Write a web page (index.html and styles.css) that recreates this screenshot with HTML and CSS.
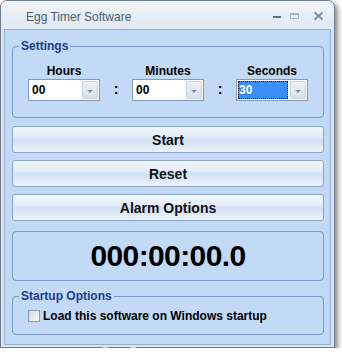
FILE: index.html
```html
<!DOCTYPE html>
<html lang="en">
<head>
  <meta charset="UTF-8">
  <title>Egg Timer Software</title>
  <link rel="stylesheet" href="styles.css">
</head>
<body>

  <div class="window">
    <div class="titlebar">
      <span class="title">Egg Timer Software</span>
      <svg class="controls" width="60" height="14" viewBox="0 0 60 14">
        <rect x="4" y="6" width="8" height="2" fill="#5f6d7e"/>
        <rect x="21.5" y="3.5" width="8" height="5" fill="none" stroke="#aab6c5"/>
        <rect x="21" y="3" width="9" height="2" fill="#aab6c5"/>
        <path d="M45.5 2.5 L53.5 9.5 M53.5 2.5 L45.5 9.5" stroke="#7f8ea2" stroke-width="2"/>
      </svg>
    </div>

    <div class="client">
      <fieldset class="group">
        <legend>Settings</legend>
        <div class="fields">
          <div class="field">
            <label>Hours</label>
            <div class="combo"><span class="value">00</span><span class="drop"></span></div>
          </div>
          <span class="colon">:</span>
          <div class="field">
            <label>Minutes</label>
            <div class="combo"><span class="value">00</span><span class="drop"></span></div>
          </div>
          <span class="colon">:</span>
          <div class="field">
            <label>Seconds</label>
            <div class="combo"><span class="value selected">30</span><span class="drop"></span></div>
          </div>
        </div>
      </fieldset>

      <button class="btn first">Start</button>
      <button class="btn">Reset</button>
      <button class="btn">Alarm Options</button>

      <div class="display">000:00:00.0</div>

      <fieldset class="group startup">
        <legend>Startup Options</legend>
        <label class="check"><span class="box"></span>Load this software on Windows startup</label>
      </fieldset>
    </div>

    <div class="watermark">GearDownload.com</div>
  </div>

</body>
</html>
```

FILE: styles.css
```css
body {
  margin: 0;
  background: #fff;
  font-family: 'Liberation Sans', Arial, sans-serif;
}

.window {
  position: relative;
  width: 333px;
  border: 1px solid #6c7d92;
  border-radius: 7px 7px 0 0;
  background: #dde6f0;
  box-shadow: 3px 3px 5px rgba(0, 0, 0, 0.45);
}

.titlebar {
  height: 19px;
  padding: 9px 0 0 25px;
  display: flex;
  align-items: flex-start;
  background: linear-gradient(#f1f5fa, #e0e8f2);
  border-radius: 6px 6px 0 0;
}

.title {
  flex: 1;
  font-size: 12px;
  color: #4e5b6b;
}

.controls {
  margin-right: 5px;
}

.client {
  margin: 0 3px 2px;
  padding: 0 6px 9px 7px;
  border: 1px solid #98adc8;
  background: #c3daf7;
}

.group {
  margin: 9px 0 0;
  padding: 0;
  min-width: 0;
  border: 1px solid #7b98c2;
  border-radius: 4px;
}

.group legend {
  margin-left: 6px;
  padding: 0 2px;
  font-size: 12px;
  font-weight: bold;
  line-height: 14px;
  color: #1d3f83;
}

.fields {
  display: flex;
  align-items: flex-end;
  padding: 11px 15px 16px;
}

.field {
  width: 72px;
  display: flex;
  flex-direction: column;
  align-items: center;
}

.field label {
  font-size: 12px;
  font-weight: bold;
  line-height: 14px;
  margin-bottom: 1px;
  color: #000;
}

.colon {
  width: 32px;
  height: 22px;
  line-height: 21px;
  text-align: center;
  font-size: 14px;
  font-weight: bold;
}

.combo {
  box-sizing: border-box;
  width: 72px;
  height: 22px;
  display: flex;
  border: 1px solid #7f9db9;
  background: #fff;
}

.value {
  flex: 1;
  padding-left: 3px;
  font-size: 12px;
  font-weight: bold;
  line-height: 20px;
}

.value.selected {
  margin: 1px;
  padding-left: 1px;
  line-height: 18px;
  background: #3a8ef8;
  color: #fff;
  outline: 1px dotted #000;
  outline-offset: -1px;
}

.drop {
  position: relative;
  width: 14px;
  margin: 1px;
  border: 1px solid #c9d4e4;
  border-radius: 2px;
  background: linear-gradient(#f0f3f8, #d6dfeb);
}

.drop::after {
  content: '';
  position: absolute;
  left: 4px;
  top: 8px;
  border-left: 3px solid transparent;
  border-right: 3px solid transparent;
  border-top: 3px solid #8390a3;
}

.btn {
  display: block;
  box-sizing: border-box;
  width: 100%;
  height: 27px;
  margin-top: 7px;
  padding: 0;
  border: 1px solid #8ba6c9;
  border-radius: 3px;
  background: linear-gradient(#f3f7fc 0%, #e2ecf8 40%, #d3e2f5 52%, #dde9f8 75%, #edf3fb 100%);
  font-family: 'Liberation Sans', Arial, sans-serif;
  font-size: 14px;
  font-weight: bold;
  color: #111;
}

.btn.first {
  margin-top: 8px;
}

.display {
  box-sizing: border-box;
  height: 50px;
  margin-top: 10px;
  display: flex;
  align-items: center;
  justify-content: center;
  border: 1px solid #7b98c2;
  border-radius: 4px;
  font-size: 30px;
  font-weight: bold;
  letter-spacing: -0.6px;
  color: #000;
}

.startup {
  margin-top: 8px;
}

.check {
  display: flex;
  align-items: center;
  padding: 6px 0 11px 15px;
  font-size: 12px;
  font-weight: bold;
  line-height: 14px;
}

.box {
  box-sizing: border-box;
  width: 12px;
  height: 12px;
  margin-right: 3px;
  border: 1px solid #8e9aab;
  background: linear-gradient(135deg, #d8dbe0, #f7f7f8);
}

.watermark {
  position: absolute;
  left: 100px;
  top: 344px;
  font-family: 'Liberation Serif', serif;
  font-size: 11px;
  line-height: 10px;
  font-variant: small-caps;
  letter-spacing: 1.2px;
  color: #e3e6ea;
  text-shadow: 0 0 1px #aeb4bd;
}
```
